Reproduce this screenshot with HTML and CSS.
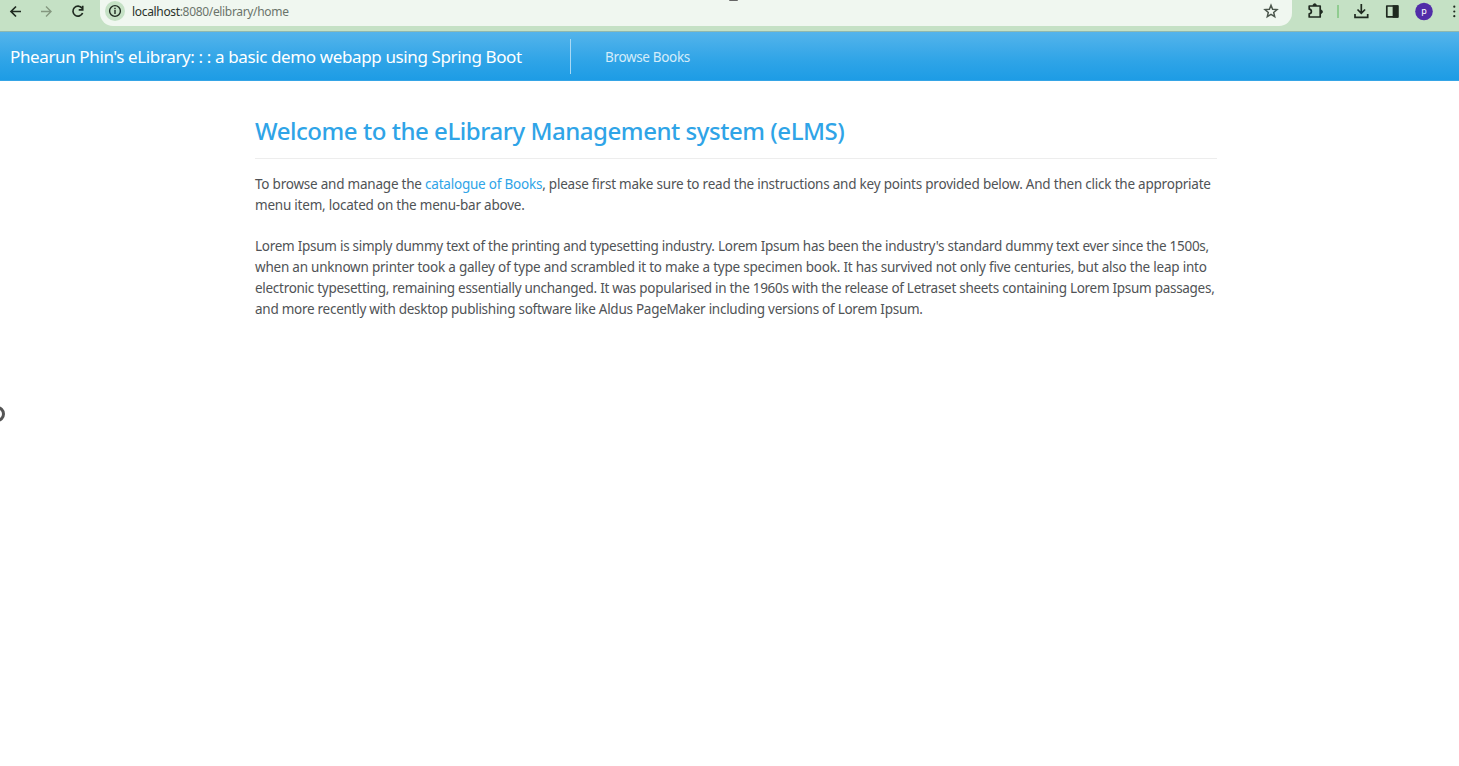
FILE: index.html
```html
<!DOCTYPE html>
<html lang="en">
<head>
<meta charset="utf-8">
<title>eLibrary</title>
<link rel="stylesheet" href="styles.css">
</head>
<body>
<header class="toolbar">
  <svg class="nav-icons" width="100" height="26" viewBox="0 0 100 26" fill="none" stroke="#1f2a20" stroke-width="1.7">
    <path d="M21 11.5H11.5M16 6.5l-5 5 5 5"/>
    <path d="M41 11.5h9.5M46 6.5l5 5-5 5" stroke="#84977f" stroke-width="1.4"/>
    <path d="M82 8.200A5 5 0 1 0 82.600 13M82.700 5.800v4h-4"/>
  </svg>
  <div class="address">
    <svg class="info" width="20" height="20" viewBox="0 0 20 20"><circle cx="10" cy="10" r="10" fill="#c5e1c5"/><circle cx="10" cy="10" r="5.400" fill="none" stroke="#1f2a20" stroke-width="1.400"/><path d="M10 9v4M10 6.800v1.400" stroke="#1f2a20" stroke-width="1.400"/></svg>
    <span class="url"><b>localhost</b>:8080/elibrary/home</span>
    <svg class="star" width="16" height="16" viewBox="0 0 16 16"><path d="M8 2.200l1.600 4 4.400.4-3.300 2.800 1 4.200L8 11.400l-3.700 2.200 1-4.200L2 6.600l4.400-.4z" fill="none" stroke="#4c574d" stroke-width="1.500"/></svg>
    <i class="notch"></i>
  </div>
  <svg class="tools" width="167" height="26" viewBox="0 0 167 26" fill="none" stroke="#1f2a20" stroke-width="1.700">
    <path d="M17.200 6h11v11h-11v-3.200c2.900-.3 2.900-4.300 0-4.600z" stroke-linejoin="round"/>
    <path d="M21 5.500a1.700 1.700 0 0 1 3.400 0zM28.700 10a1.700 1.700 0 0 1 0 3.400z" fill="#1f2a20" stroke-width="1"/>
    <path d="M46 5v13" stroke="#83c783" stroke-width="1.600"/>
    <path d="M69.300 4v9M65.500 9.500l3.800 3.800 3.800-3.800M63 14v3.300h12.700V14"/>
    <path d="M94.800 6h11v10.800h-11z" stroke-linejoin="round"/><path d="M101.500 6h4v10.800h-4z" fill="#1f2a20"/>
    <circle cx="132" cy="11.500" r="8.800" fill="#512da8" stroke="none"/>
    <text x="132" y="14" class="avatar">p</text>
    <g fill="#1f2a20" stroke="none"><circle cx="162.300" cy="6.700" r="1.100"/><circle cx="162.300" cy="11.500" r="1.100"/><circle cx="162.300" cy="16.200" r="1.100"/></g>
  </svg>
</header>
<nav class="navbar">
  <span class="brand">Phearun Phin's eLibrary: : : a basic demo webapp using Spring Boot</span>
  <span class="browse">Browse Books</span>
</nav>
<main class="content">
  <h1>Welcome to the eLibrary Management system (eLMS)</h1>
  <p><span class="snug">To browse and manage the <a>catalogue of Books</a>, please first make sure to read the instructions and key points provided below. And then click the appropriate</span><br><span class="snug">menu item, located on the menu-bar above.</span></p>
  <p><span class="tight">Lorem Ipsum is simply dummy text of the printing and typesetting industry. Lorem Ipsum has been the industry's standard dummy text ever since the 1500s,</span><br><span class="snug">when an unknown printer took a galley of type and scrambled it to make a type specimen book. It has survived not only five centuries, but also the leap into</span><br><span class="tighter">electronic typesetting, remaining essentially unchanged. It was popularised in the 1960s with the release of Letraset sheets containing Lorem Ipsum passages,</span><br><span class="tight">and more recently with desktop publishing software like Aldus PageMaker including versions of Lorem Ipsum.</span></p>
</main>
<i class="handle"></i>
</body>
</html>
```
FILE: styles.css
```css
* { box-sizing: border-box; }
body { margin: 0; height: 766px; overflow: hidden; background: #fff; color: #505356; font-family: "Noto Sans", "Open Sans", sans-serif; }
.toolbar { display: flex; height: 31px; background: #c5e1c5; }
.nav-icons, .tools { flex: none; }
.address { position: relative; display: flex; align-items: center; flex: none; width: 1192px; height: 26px; padding: 0 13px 3px 5px; background: #f0f7f0; border-radius: 0 0 13px 13px; }
.info { margin-top: -1px; }
.url { margin-left: 7px; font-size: 12px; letter-spacing: -.33px; color: #6a746b; white-space: nowrap; }
.url b { font-weight: 400; color: #2a332b; }
.star { margin-left: auto; margin-top: -1px; }
.notch { position: absolute; left: 629px; top: 0; width: 9px; height: 1px; background: #666; border-radius: 0 0 4px 4px; }
.avatar { font: 9px "Noto Sans", sans-serif; fill: #fff; stroke: none; text-anchor: middle; }
.navbar { display: flex; align-items: center; height: 50px; padding-left: 10px; background: linear-gradient(#54b4eb, #2fa4e7 60%, #1d9ce5); border-top: 1px solid #8fb8ae; border-bottom: 1px solid #35a5e6; white-space: nowrap; }
.brand { width: 561px; height: 35px; line-height: 35px; border-right: 1px solid #a9d9f5; font-size: 17px; letter-spacing: -.377px; color: #fff; }
.browse { margin-left: 34px; padding-top: 2px; font-size: 13.5px; letter-spacing: -.34px; color: #d4ecfa; }
.content { width: 962px; margin: 0 0 0 255px; padding-top: 34px; white-space: nowrap; }
h1 { height: 44px; margin: 0 0 15px; line-height: 31px; border-bottom: 1px solid #ededed; font-size: 24px; font-weight: 500; letter-spacing: -.455px; color: #2fa4e7; }
p { margin: 0 0 20.8px; font-size: 13.5px; line-height: 20.75px; }
.snug { letter-spacing: -.22px; }
.tight { letter-spacing: -.267px; }
.tighter { letter-spacing: -.283px; }
a { color: #2fa4e7; }
.handle { position: absolute; left: -11px; top: 406px; width: 16px; height: 16px; border: 3px solid #555; border-radius: 50%; }
```
